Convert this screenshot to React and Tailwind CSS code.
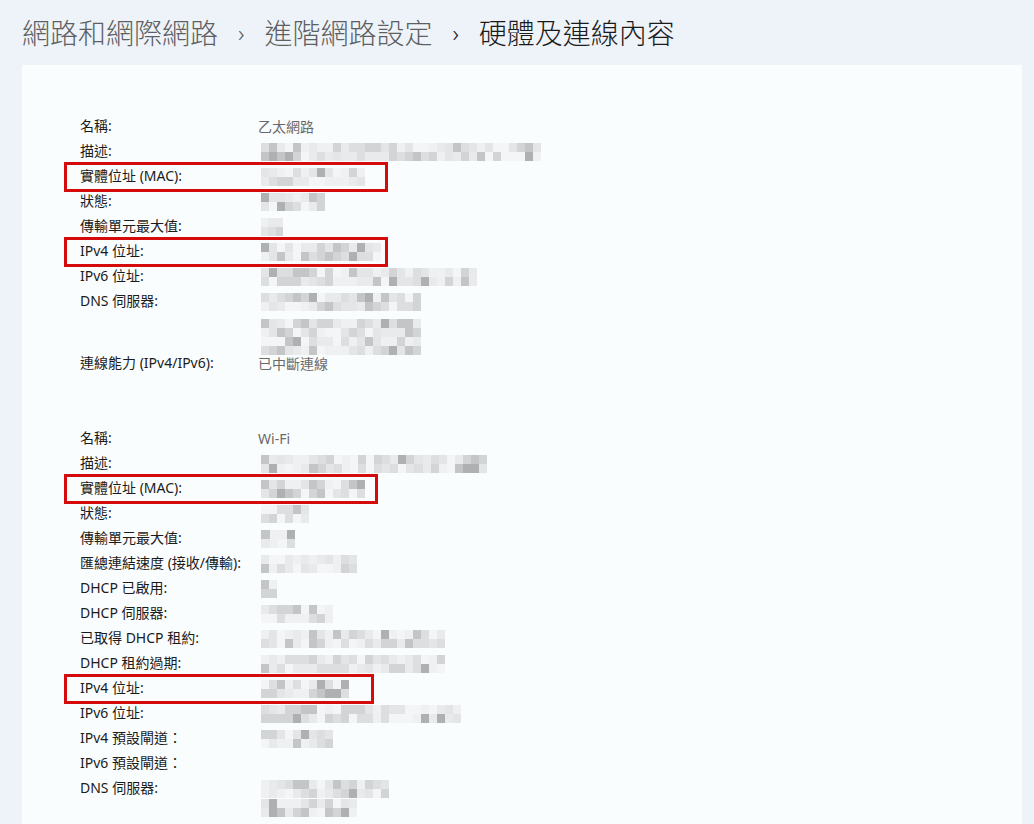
import React from "react";

const FONT = { fontFamily: '"Noto Sans", "Noto Sans CJK TC", sans-serif' };

// deterministic pseudo-random for the pixelated (redacted) values
function seeded(seed) {
  let s = seed;
  return () => {
    s = (s * 9301 + 49297) % 233280;
    return s / 233280;
  };
}

const GRAYS = ["#f4f5f6", "#eef0f1", "#e9eaec", "#e3e5e7", "#dcdee0", "#d2d4d6", "#c3c5c7", "#aeb0b2"];

const Blur = ({ w, lines = 2, seed = 1 }) => {
  const rnd = seeded(seed * 97 + w);
  const cols = Math.max(1, Math.round(w / 8));
  return (
    <div className="flex flex-col blur-[0.6px] mt-[1px] ml-[3px]" style={{ width: w }}>
      {Array.from({ length: lines }).map((_, r) => (
        <div key={r} className="flex h-[9px]">
          {Array.from({ length: cols }).map((_, c) => {
            const v = rnd();
            const idx = v < 0.07 ? 7 : v < 0.16 ? 6 : Math.floor(rnd() * 6);
            return <div key={c} className="h-full flex-1" style={{ background: GRAYS[idx] }} />;
          })}
        </div>
      ))}
    </div>
  );
};

const Row = ({ label, children, boxW, h = "h-[25px]" }) => (
  <div className={`relative flex ${h}`}>
    {boxW && (
      <div
        className="absolute left-[-16px] top-[-2px] h-[30px] border-[3px] border-[#d50b0b] pointer-events-none"
        style={{ width: boxW }}
      />
    )}
    <div className="w-[178px] shrink-0 flex items-start pt-[2px] text-[14px] leading-[20px] text-[#1b1b1b]">
      {label}
    </div>
    <div className="flex-1 flex items-start pt-[3px] text-[14px] leading-[20px] text-[#6a6a6a]">{children}</div>
  </div>
);

const ETHERNET = [
  { label: "名稱:", text: "乙太網路" },
  { label: "描述:", w: 280 },
  { label: "實體位址 (MAC):", w: 104, box: 324 },
  { label: "狀態:", w: 64 },
  { label: "傳輸單元最大值:", w: 22 },
  { label: "IPv4 位址:", w: 120, box: 324 },
  { label: "IPv6 位址:", w: 216 },
];

const WIFI = [
  { label: "名稱:", text: "Wi-Fi" },
  { label: "描述:", w: 226 },
  { label: "實體位址 (MAC):", w: 104, box: 314 },
  { label: "狀態:", w: 48 },
  { label: "傳輸單元最大值:", w: 34 },
  { label: "匯總連結速度 (接收/傳輸):", w: 96 },
  { label: "DHCP 已啟用:", w: 16 },
  { label: "DHCP 伺服器:", w: 72 },
  { label: "已取得 DHCP 租約:", w: 184 },
  { label: "DHCP 租約過期:", w: 184 },
  { label: "IPv4 位址:", w: 88, box: 310 },
  { label: "IPv6 位址:", w: 200 },
  { label: "IPv4 預設閘道：", w: 72 },
  { label: "IPv6 預設閘道：" },
];

const renderRows = (rows, seedBase) =>
  rows.map((r, i) => (
    <Row key={r.label + i} label={r.label} boxW={r.box}>
      {r.text ? <span>{r.text}</span> : r.w ? <Blur w={r.w} seed={seedBase + i} /> : null}
    </Row>
  ));

export default function App() {
  return (
    <div className="min-h-screen w-[1034px] h-[824px] overflow-hidden bg-[#eef3f9]" style={FONT}>
      {/* breadcrumb */}
      <div className="h-[65px] pl-[22px] pt-[13px] flex items-start text-[28px] leading-[40px] font-light">
        <span className="text-[#5d5f62]">網路和網際網路</span>
        <span className="text-[#5d5f62] text-[24px] mx-[20px]">›</span>
        <span className="text-[#5d5f62]">進階網路設定</span>
        <span className="text-[#1b1b1b] text-[24px] mx-[20px]">›</span>
        <span className="text-[#1b1b1b]">硬體及連線內容</span>
      </div>

      {/* properties card */}
      <div className="ml-[22px] w-[1000px] h-[759px] bg-[#fafdfe] pl-[58px] pt-[49px]">
        {renderRows(ETHERNET, 10)}
        <Row label="DNS 伺服器:" h="h-[62px]">
          <div className="flex flex-col gap-[7px]">
            <Blur w={160} seed={40} />
            <Blur w={160} lines={4} seed={41} />
          </div>
        </Row>
        <Row label="連線能力 (IPv4/IPv6):">
          <span>已中斷連線</span>
        </Row>

        <div className="h-[50px]" />

        {renderRows(WIFI, 60)}
        <Row label="DNS 伺服器:" h="h-[48px]">
          <div className="flex flex-col">
            <Blur w={128} seed={90} />
            <Blur w={96} seed={91} />
          </div>
        </Row>
      </div>
    </div>
  );
}
